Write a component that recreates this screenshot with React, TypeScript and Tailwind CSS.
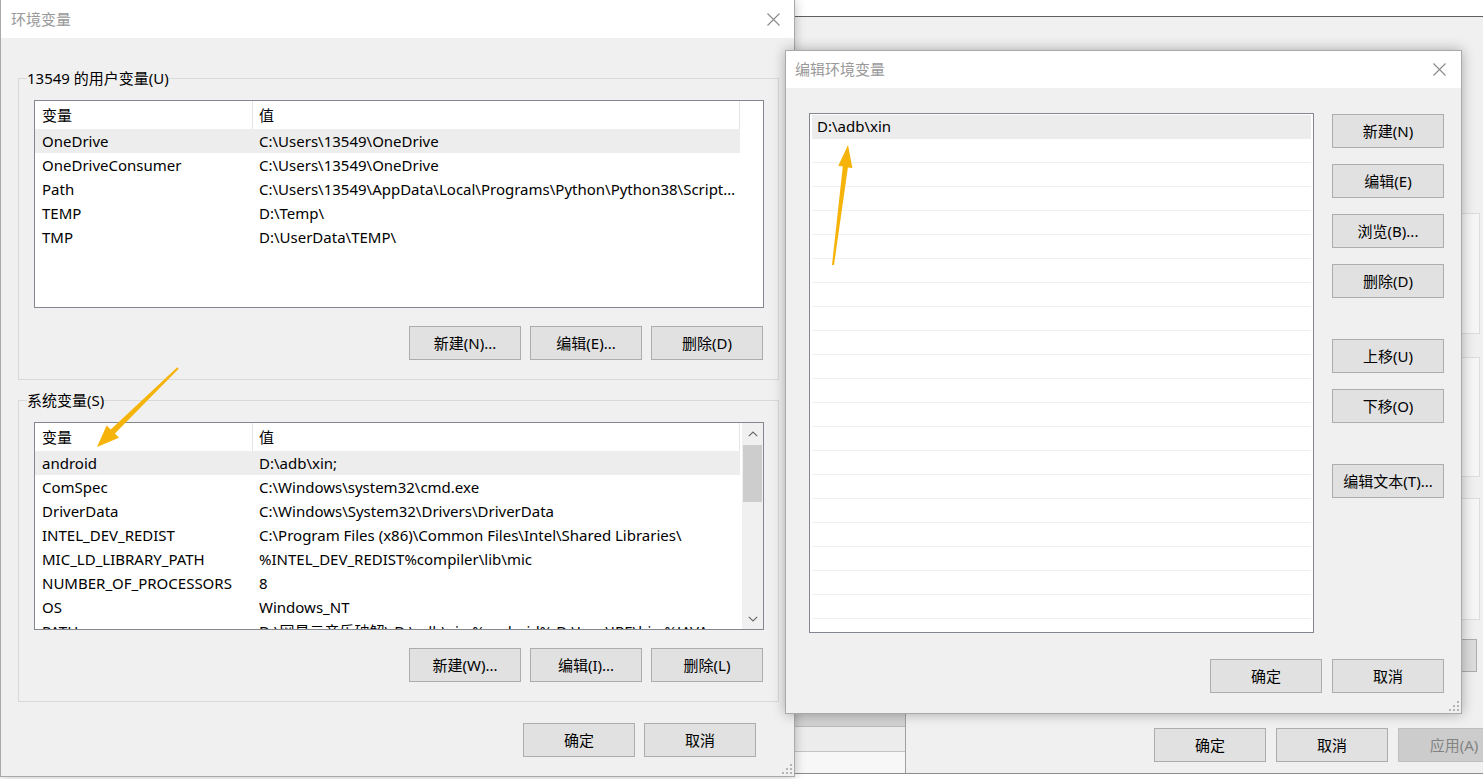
import React from "react";

type Row = [string, string];

const userRows: Row[] = [
  ["OneDrive", "C:\\Users\\13549\\OneDrive"],
  ["OneDriveConsumer", "C:\\Users\\13549\\OneDrive"],
  ["Path", "C:\\Users\\13549\\AppData\\Local\\Programs\\Python\\Python38\\Scripts\\;C:\\Users\\13549\\AppData"],
  ["TEMP", "D:\\Temp\\"],
  ["TMP", "D:\\UserData\\TEMP\\"],
];

const sysRows: Row[] = [
  ["android", "D:\\adb\\xin;"],
  ["ComSpec", "C:\\Windows\\system32\\cmd.exe"],
  ["DriverData", "C:\\Windows\\System32\\Drivers\\DriverData"],
  ["INTEL_DEV_REDIST", "C:\\Program Files (x86)\\Common Files\\Intel\\Shared Libraries\\"],
  ["MIC_LD_LIBRARY_PATH", "%INTEL_DEV_REDIST%compiler\\lib\\mic"],
  ["NUMBER_OF_PROCESSORS", "8"],
  ["OS", "Windows_NT"],
  ["PATH", "D:\\网易云音乐破解\\;D:\\adb\\xin;%android%;D:\\Java\\JRE\\bin;%JAVA_HOME%"],
];

function Btn({ children, disabled }: { children: React.ReactNode; disabled?: boolean }) {
  return (
    <div
      className={
        disabled
          ? "flex h-[34px] w-[112px] shrink-0 items-center justify-center border border-[#bfbfbf] bg-[#cccccc] text-[15px] text-[#838383]"
          : "flex h-[34px] w-[112px] shrink-0 items-center justify-center border border-[#adadad] bg-[#e1e1e1] text-[15px] text-black"
      }
    >
      {children}
    </div>
  );
}

function CloseX() {
  return (
    <svg width="13" height="13" viewBox="0 0 13 13">
      <path d="M0.5 0.5 L12.5 12.5 M12.5 0.5 L0.5 12.5" stroke="#8a8a8a" strokeWidth="1.1" fill="none" />
    </svg>
  );
}

function Chev({ down }: { down?: boolean }) {
  return (
    <svg width="10" height="6" viewBox="0 0 10 6">
      <polyline
        points={down ? "0.8,0.8 5,5 9.2,0.8" : "0.8,5.2 5,1 9.2,5.2"}
        fill="none"
        stroke="#6a6a6a"
        strokeWidth="1.2"
      />
    </svg>
  );
}

function Grip() {
  return (
    <svg width="11" height="11" viewBox="0 0 11 11">
      <g fill="#b4b4b4">
        <rect x="8" y="0" width="2" height="2" />
        <rect x="8" y="4" width="2" height="2" />
        <rect x="4" y="4" width="2" height="2" />
        <rect x="8" y="8" width="2" height="2" />
        <rect x="4" y="8" width="2" height="2" />
        <rect x="0" y="8" width="2" height="2" />
      </g>
    </svg>
  );
}

function ListView({ rows, scroll }: { rows: Row[]; scroll?: boolean }) {
  return (
    <div className="ml-[15px] flex h-[208px] w-[730px] overflow-hidden border border-[#828790] bg-white">
      <div className="flex min-w-0 flex-1 flex-col overflow-hidden">
        <div className="flex h-[28px] shrink-0 items-center">
          <div className="flex h-full w-[218px] shrink-0 items-center border-r border-[#e5e5e5] pl-[7px]">变量</div>
          <div className="flex h-full w-[487px] shrink-0 items-center border-r border-[#e5e5e5] pl-[6px]">值</div>
        </div>
        {rows.map((r, i) => (
          <div
            key={r[0]}
            className={
              i === 0
                ? "flex h-[24px] w-[705px] shrink-0 items-center bg-[#ededed]"
                : "flex h-[24px] w-[705px] shrink-0 items-center"
            }
          >
            <div className="w-[218px] shrink-0 truncate pl-[7px]">{r[0]}</div>
            <div className="w-[487px] shrink-0 truncate pl-[6px] pr-[3px]">{r[1]}</div>
          </div>
        ))}
      </div>
      {scroll && (
        <div className="flex w-[21px] shrink-0 flex-col bg-[#f0f0f0]">
          <div className="flex h-[21px] items-center justify-center">
            <Chev />
          </div>
          <div className="mx-[1px] mt-[1px] h-[57px] bg-[#cdcdcd]" />
          <div className="flex-1" />
          <div className="flex h-[21px] items-center justify-center">
            <Chev down />
          </div>
        </div>
      )}
    </div>
  );
}

function GroupBox({
  label,
  rows,
  scroll,
  buttons,
  className,
}: {
  label: string;
  rows: Row[];
  scroll?: boolean;
  buttons: string[];
  className: string;
}) {
  return (
    <div className={className}>
      <div className="-mt-[11px] ml-[8px] h-[20px] w-fit bg-[#f0f0f0] leading-[20px]">{label}</div>
      <div className="mt-[12px]">
        <ListView rows={rows} scroll={scroll} />
      </div>
      <div className="mt-[18px] flex justify-end gap-[9px] pb-[19px] pr-[15px]">
        {buttons.map((b) => (
          <Btn key={b}>{b}</Btn>
        ))}
      </div>
    </div>
  );
}

export default function App() {
  const emptyRows = Array.from({ length: 20 });
  return (
    <div className="relative h-[779px] w-[1483px] overflow-hidden bg-white font-['Noto_Sans','Noto_Sans_CJK_SC',sans-serif] text-[15px] text-black">
      {/* background window (system properties) */}
      <div className="absolute left-[791px] right-0 top-[16px] flex h-[758px] flex-col border-b border-t border-[#8c8c8c] border-t-[#5f5f5f] bg-[#f0f0f0]">
        <div className="flex flex-1 flex-col items-end pt-[196px]">
          <div className="mr-[3px] h-[121px] w-[300px] border border-[#dcdcdc] bg-[#f6f6f6]" />
          <div className="mr-[3px] mt-[23px] h-[120px] w-[300px] border border-[#dcdcdc] bg-[#f6f6f6]" />
          <div className="mr-[3px] mt-[21px] h-[122px] w-[300px] border border-[#dcdcdc] bg-[#f6f6f6]" />
          <div className="mr-[6px] mt-[19px] h-[33px] w-[150px] border border-[#adadad] bg-[#dcdcdc]" />
        </div>
        <div className="flex h-[59px] shrink-0">
          <div className="flex w-[114px] shrink-0 flex-col bg-[#f3f3f3]">
            <div className="h-[12px] bg-[#d2d2d2]" />
            <div className="h-[25px] border-t border-[#b9b9b9] bg-[#ececec]" />
            <div className="flex-1 border-t border-[#c4c4c4] bg-[#f7f7f7]" />
          </div>
          <div className="flex flex-1 gap-[10px] border-l border-[#a0a0a0] pl-[248px] pt-[14px]">
            <Btn>确定</Btn>
            <Btn>取消</Btn>
            <Btn disabled>应用(A)</Btn>
          </div>
        </div>
      </div>

      {/* left dialog: 环境变量 */}
      <div className="absolute left-0 top-0 flex h-[777px] w-[795px] flex-col border-b border-l border-r border-[#a9a9a9] bg-[#f0f0f0] shadow-[0_0_10px_rgba(0,0,0,0.25)]">
        <div className="flex h-[38px] shrink-0 items-center justify-between bg-white pl-[10px] pr-[14px]">
          <span className="text-[#999999]">环境变量</span>
          <CloseX />
        </div>
        <div className="flex flex-1 flex-col pl-[17px] pt-[40px]">
          <GroupBox
            className="w-[761px] border border-[#d9d9d9]"
            label="13549 的用户变量(U)"
            rows={userRows}
            buttons={["新建(N)...", "编辑(E)...", "删除(D)"]}
          />
          <GroupBox
            className="mt-[20px] w-[761px] border border-[#d9d9d9]"
            label="系统变量(S)"
            rows={sysRows}
            scroll
            buttons={["新建(W)...", "编辑(I)...", "删除(L)"]}
          />
          <div className="mt-[21px] flex justify-end gap-[9px] pr-[38px]">
            <Btn>确定</Btn>
            <Btn>取消</Btn>
          </div>
        </div>
        <div className="absolute bottom-[1px] right-[1px]">
          <Grip />
        </div>
      </div>

      {/* right dialog: 编辑环境变量 */}
      <div className="absolute left-[785px] top-[50px] flex h-[664px] w-[677px] flex-col border border-[#a9a9a9] bg-[#f0f0f0] shadow-[0_0_12px_rgba(0,0,0,0.3)]">
        <div className="flex h-[37px] shrink-0 items-center justify-between bg-white pl-[9px] pr-[15px]">
          <span className="text-[#999999]">编辑环境变量</span>
          <CloseX />
        </div>
        <div className="flex flex-1 flex-col pl-[23px] pr-[17px] pt-[25px]">
          <div className="flex gap-[18px]">
            <div className="flex h-[520px] w-[505px] shrink-0 flex-col overflow-hidden border border-[#828790] bg-white px-[2px] pt-[1px]">
              <div className="flex h-[24px] shrink-0 items-center border-b border-[#ececec] bg-[#ececec] pl-[5px]">
                D:\adb\xin
              </div>
              {emptyRows.map((_, i) => (
                <div key={i} className="h-[24px] shrink-0 border-b border-[#efefef]" />
              ))}
            </div>
            <div className="flex flex-col pt-[1px]">
              <Btn>新建(N)</Btn>
              <div className="mt-[16px]">
                <Btn>编辑(E)</Btn>
              </div>
              <div className="mt-[16px]">
                <Btn>浏览(B)...</Btn>
              </div>
              <div className="mt-[16px]">
                <Btn>删除(D)</Btn>
              </div>
              <div className="mt-[41px]">
                <Btn>上移(U)</Btn>
              </div>
              <div className="mt-[16px]">
                <Btn>下移(O)</Btn>
              </div>
              <div className="mt-[41px]">
                <Btn>编辑文本(T)...</Btn>
              </div>
            </div>
          </div>
          <div className="mt-[26px] flex justify-end gap-[10px]">
            <Btn>确定</Btn>
            <Btn>取消</Btn>
          </div>
        </div>
        <div className="absolute bottom-[1px] right-[1px]">
          <Grip />
        </div>
      </div>

      {/* annotation arrows */}
      <svg className="pointer-events-none absolute left-0 top-0" width="1483" height="779" viewBox="0 0 1483 779">
        <polygon
          fill="#f6b40a"
          points="178.7,368.7 114.9,433.6 119,437.8 97,447 106.6,425.4 110.8,429.4 177.3,367.3"
        />
        <polygon
          fill="#f6b40a"
          points="834,265.1 847.9,167.4 852.4,168 848,145 838.3,165.8 842.8,166.5 832,264.9"
        />
      </svg>
    </div>
  );
}
